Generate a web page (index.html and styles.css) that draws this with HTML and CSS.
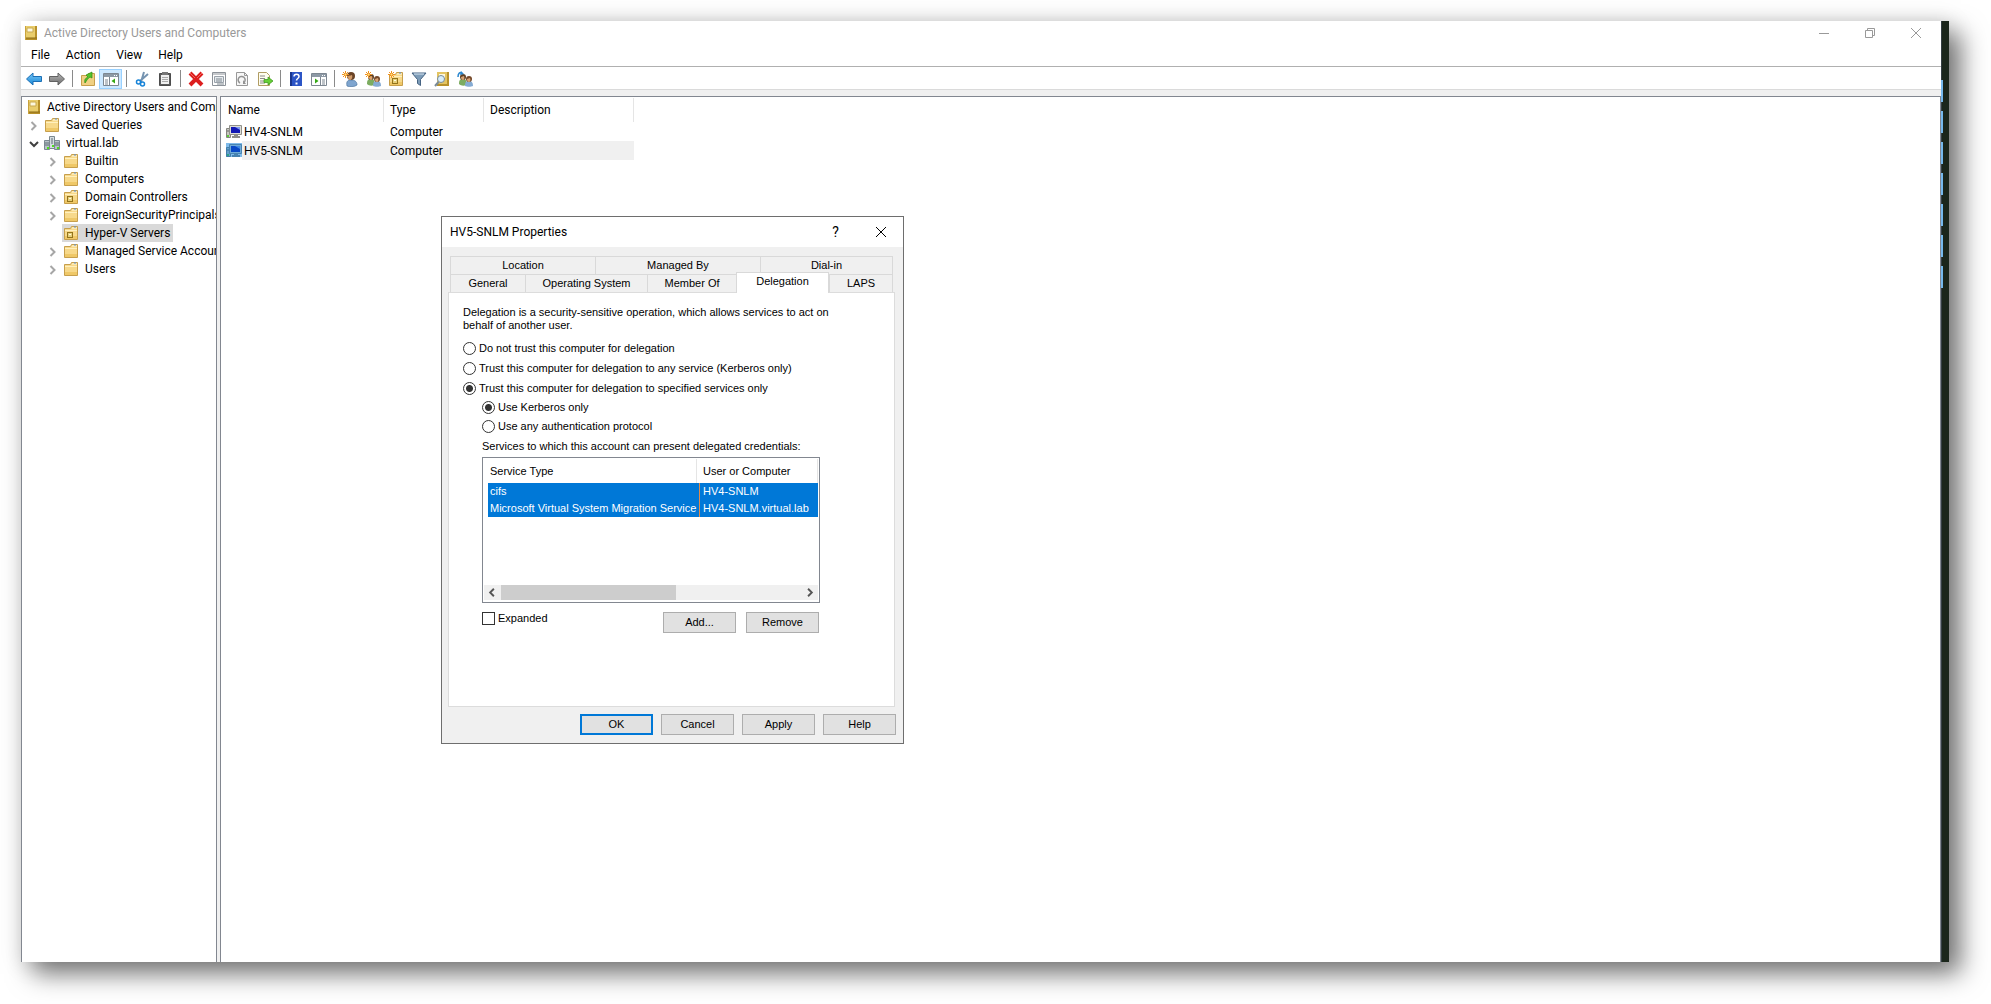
FILE: index.html
```html
<!DOCTYPE html>
<html lang="en">
<head>
    <meta charset="UTF-8">
    <meta name="viewport" content="width=device-width, initial-scale=1.0">
    <title>Active Directory Users and Computers</title>
    <link rel="stylesheet" href="styles.css">
</head>
<body>
    <!-- Shared icons -->
    <svg class="icon-defs" width="0" height="0" aria-hidden="true">
        <symbol id="i-book" viewBox="0 0 16 16">
            <rect x="2" y="1" width="12" height="14" fill="#e9cd6c"/>
            <path d="M12 1h2v14H2v-2h10z" fill="#b8912b"/>
            <rect x="2" y="1" width="1" height="14" fill="#c9a33d"/>
            <path d="M4 3h6v4H4z" fill="#fdf8df" stroke="#c9a94e"/>
            <path d="M3 13h11" stroke="#8a6a14"/>
        </symbol>
        <symbol id="i-folder" viewBox="0 0 16 16">
            <path d="M1.500 3.500h6l1-2h6v13h-13z" fill="#f7d98b" stroke="#c79f4c"/>
            <path d="M9 3h5" stroke="#fff6d8"/>
            <path d="M11 2h2" stroke="#5a8fd0"/>
            <path d="M2 5.500h12" stroke="#fff0bf"/>
            <path d="M2 11h12v3H2z" fill="#efc868"/>
        </symbol>
        <symbol id="i-ou" viewBox="0 0 16 16">
            <use href="#i-folder"/>
            <rect x="4.500" y="7.500" width="5" height="5" fill="#e6cf7a" stroke="#93731b"/>
            <path d="M6 9h2v1H6z" fill="#fffbe0"/>
        </symbol>
        <symbol id="i-domain" viewBox="0 0 16 16">
            <path d="M.5 5.500h5v9h-5zM10.500 5.500h5v9h-5z" fill="#b9c3c9" stroke="#7b8890"/>
            <path d="M5.500 1.500h5v12h-5z" fill="#d5dde1" stroke="#7b8890"/>
            <path d="M7 4h2M7 6h2M7 8h2M1 8h4M1 10h4M11 8h4M11 10h4" stroke="#5f6d75"/>
            <path d="M3 12h2v2H3zM8 10h2v2H8zM13 12h2v2h-2z" fill="#4fe01c"/>
        </symbol>
        <symbol id="i-computer" viewBox="0 0 16 16">
            <path d="M.5 4.500h4v9h-4z" fill="#c6c6c0" stroke="#85857f"/>
            <path d="M1 7h3" stroke="#666"/>
            <path d="M1 11h2v2H1z" fill="#5ccc38"/>
            <path d="M3.500 1.500h12v9h-12z" fill="#dcdcd6" stroke="#90908a"/>
            <path d="M5 3h9v6H5z" fill="#1218b4"/>
            <path d="M9 3h5v3z" fill="#7f9bf0"/>
            <path d="M8 11h4v1h2v2H6v-2h2z" fill="#8d8d88"/>
        </symbol>
        <symbol id="i-user" viewBox="0 0 16 16">
            <path d="M5 15c-1-5 1-6 4-6s6 1 6 5c-2 2-8 2-10 1z" fill="#7fa5cf" stroke="#4d769f" stroke-width=".7"/>
            <circle cx="9" cy="5" r="4" fill="#6b4426"/>
            <path d="M6 6c0-2 2-1 4-2 1 3-1 5-2 5s-2-1-2-3z" fill="#d29c6b"/>
        </symbol>
        <symbol id="i-users" viewBox="0 0 16 16">
            <path d="M2 13c0-4 1-5 4-5s4 2 3 6c-2 1-5 1-7-1z" fill="#7cac60"/>
            <circle cx="6" cy="6" r="3" fill="#5e4127"/>
            <path d="M4 6l3-1c1 2 0 4-1 4s-2-1-2-3z" fill="#d8a373"/>
            <path d="M8 15c0-4 1-5 4-5s4 2 4 5c-2 1-6 1-8 0z" fill="#85abd3"/>
            <circle cx="12" cy="8" r="3" fill="#74482a"/>
            <path d="M10 8l3-1c1 2 0 4-1 4s-2-1-2-3z" fill="#d8a373"/>
        </symbol>
        <symbol id="i-spark" viewBox="0 0 16 16">
            <path d="M3.500 0v7M0 3.500h7M1 1l5 5M6 1L1 6" stroke="#f0921e"/>
            <circle cx="3.500" cy="3.500" r="1" fill="#ffe48a"/>
        </symbol>
        <symbol id="i-right" viewBox="0 0 16 16">
            <path d="M5.500 5l4 4-4 4" fill="none" stroke="currentColor" stroke-width="2"/>
        </symbol>
        <symbol id="i-down" viewBox="0 0 16 16">
            <path d="M4 7l4 4 4-4" fill="none" stroke="currentColor" stroke-width="2"/>
        </symbol>
        <linearGradient id="blue" x2="0" y2="1"><stop offset="0" stop-color="#7cc7f5"/><stop offset="1" stop-color="#1487d8"/></linearGradient>
        <linearGradient id="gray" x2="0" y2="1"><stop offset="0" stop-color="#b5b5b5"/><stop offset="1" stop-color="#6c6c6c"/></linearGradient>
    </svg>

    <div class="screen">
        <div class="window">
            <header class="title-bar">
                <svg class="icon"><use href="#i-book"/></svg>
                <span class="title">Active Directory Users and Computers</span>
                <div class="window-buttons">
                    <button aria-label="Minimize"><svg viewBox="0 0 12 12"><path d="M1 6.500h10"/></svg></button>
                    <button aria-label="Restore"><svg viewBox="0 0 12 12"><path d="M1.500 3.500h7v7h-7zM3.500 3V1.500h7v7H9"/></svg></button>
                    <button aria-label="Close"><svg viewBox="0 0 12 12"><path d="M1 1l10 10M11 1L1 11"/></svg></button>
                </div>
            </header>

            <nav class="menu-bar">
                <button>File</button>
                <button>Action</button>
                <button>View</button>
                <button>Help</button>
            </nav>

            <div class="toolbar">
                <button aria-label="Back"><svg class="icon" viewBox="0 0 16 16"><path d="M.5 8L7 2v3.500h8.500v5H7V14z" fill="url(#blue)" stroke="#1c6fb5"/></svg></button>
                <button aria-label="Forward"><svg class="icon" viewBox="0 0 16 16"><path d="M15.500 8L9 2v3.500H.5v5H9V14z" fill="url(#gray)" stroke="#626262"/></svg></button>
                <span class="separator"></span>
                <button aria-label="Up one level"><svg class="icon" viewBox="0 0 16 16"><path d="M1.500 4.500h6l1-2h6v12h-13z" fill="#f0d083" stroke="#c79f4c"/><path d="M5 12c-1-4 1-5 3-6L6 4l6-3v6L10 6c-2 1-3 3-5 6z" fill="#55c52c" stroke="#2f8a14" stroke-width=".7"/></svg></button>
                <button class="active" aria-label="Show console tree"><svg class="icon" viewBox="0 0 16 16"><path d="M.5 2.500h15v12H.5z" fill="#fff" stroke="#7d8791"/><path d="M1 3h14v3H1z" fill="#8d99a5"/><path d="M11 4.500h1M13 4.500h1" stroke="#fff"/><path d="M2 9h3M2 11h3M2 13h3M6.500 6v8" stroke="#7d8791"/><path d="M12 7.500v5L8.500 10z" fill="#35a814"/></svg></button>
                <span class="separator"></span>
                <button aria-label="Cut"><svg class="icon" viewBox="0 0 16 16"><path d="M10 1L7 11M14 3L6 10" stroke="#7593b0" stroke-width="2"/><circle cx="4.500" cy="11" r="2" fill="none" stroke="#1683d8" stroke-width="1.500"/><circle cx="8.500" cy="13" r="2" fill="none" stroke="#1683d8" stroke-width="1.500"/></svg></button>
                <button aria-label="Copy"><svg class="icon" viewBox="0 0 16 16"><path d="M2.500 2.500h11v12h-11z" fill="#5c5c5c" stroke="#4c4c4c"/><path d="M4 4h8v9H4z" fill="#f0f0f0"/><path d="M5 1h6v3H5z" fill="#777"/><path d="M5 6.500h6M5 8.500h6M5 10.500h6" stroke="#aaa"/></svg></button>
                <span class="separator"></span>
                <button aria-label="Delete"><svg class="icon" viewBox="0 0 16 16"><path d="M2 2l12 12M14 2L2 14" stroke="#dc1e1e" stroke-width="4"/><path d="M2 2l5 5M14 2L9 7" stroke="#f36a60"/></svg></button>
                <button aria-label="Properties"><svg class="icon" viewBox="0 0 16 16"><path d="M1.500 1.500h13v13h-13z" fill="#fff" stroke="#8c9299"/><path d="M2 3h12" stroke="#8c9299"/><path d="M3.500 5.500h9v6h-9z" fill="#e4e9ed" stroke="#9aa2aa"/><path d="M5 8h6M5 10h6M6 13h7" stroke="#7f8890"/></svg></button>
                <button aria-label="Refresh"><svg class="icon" viewBox="0 0 16 16"><path d="M2.500 1.500h8l3 3v10h-11z" fill="#f7f7f7" stroke="#999"/><path d="M10.500 1.500v3h3" fill="none" stroke="#999"/><path d="M6 12a3.500 3.500 0 1 1 4-.5" fill="none" stroke="#929292" stroke-width="1.500"/><path d="M9 9v4h3z" fill="#929292"/></svg></button>
                <button aria-label="Export list"><svg class="icon" viewBox="0 0 16 16"><path d="M1.500 1.500h8l3 3v10h-11z" fill="#fffdee" stroke="#b09c63"/><path d="M3 5h5M3 7.500h5M3 10h4M3 12h5" stroke="#8c8c8c"/><path d="M7 8.500h4V6l5 4-5 4v-2.500H7z" fill="#67cf38" stroke="#359216" stroke-width=".7"/></svg></button>
                <span class="separator"></span>
                <button aria-label="Help"><svg class="icon" viewBox="0 0 16 16"><path d="M2 1h12v14H2z" fill="#2c55c6"/><path d="M2 1h2v14H2z" fill="#17348c"/><path d="M6 5.500c0-3 5-3 5 0 0 2-2.500 2-2.500 4" fill="none" stroke="#fff" stroke-width="1.500"/><path d="M7.500 11.500h2v2h-2z" fill="#fff"/></svg></button>
                <button aria-label="Show action pane"><svg class="icon" viewBox="0 0 16 16"><path d="M.5 2.500h15v12H.5z" fill="#fff" stroke="#7d8791"/><path d="M1 3h14v3H1z" fill="#8d99a5"/><path d="M11 4.500h1M13 4.500h1" stroke="#fff"/><path d="M11 9h3M11 11h3M11 13h3M9.500 6v8" stroke="#7d8791"/><path d="M4 7.500v5L7.500 10z" fill="#35a814"/></svg></button>
                <span class="separator"></span>
                <button aria-label="New user"><svg class="icon"><use href="#i-user"/><use href="#i-spark"/></svg></button>
                <button aria-label="New group"><svg class="icon"><use href="#i-users"/><use href="#i-spark"/></svg></button>
                <button aria-label="New organizational unit"><svg class="icon"><use href="#i-ou"/><use href="#i-spark"/></svg></button>
                <button aria-label="Filter"><svg class="icon" viewBox="0 0 16 16"><path d="M1 2h14L9.500 8.500v6l-3-2v-4z" fill="#7d9cb8" stroke="#456382"/><path d="M3 3h10" stroke="#d9e7f2"/></svg></button>
                <button aria-label="Find"><svg class="icon" viewBox="0 0 16 16"><path d="M3 1h12v14H3z" fill="#e3c462"/><path d="M13 1h2v14H3v-2h10z" fill="#b8912b"/><path d="M5 3h6v4H5z" fill="#fdf8df"/><circle cx="7" cy="8" r="3.500" fill="#d7eefb" stroke="#798a97"/><path d="M4.500 11L1 15" stroke="#798a97" stroke-width="2"/></svg></button>
                <button aria-label="Add to group"><svg class="icon"><use href="#i-users"/><path d="M1 6c0-4 2-5 4-4" fill="none" stroke="#2b87cf" stroke-width="1.500"/><path d="M4 0l3 3-4 1z" fill="#2b87cf"/></svg></button>
            </div>

            <div class="panes">
                <aside class="tree">
                    <ul>
                        <li class="root"><svg class="icon"><use href="#i-book"/></svg><span>Active Directory Users and Computers</span></li>
                        <li><svg class="chevron"><use href="#i-right"/></svg><svg class="icon"><use href="#i-folder"/></svg><span>Saved Queries</span></li>
                        <li><svg class="chevron open"><use href="#i-down"/></svg><svg class="icon"><use href="#i-domain"/></svg><span>virtual.lab</span></li>
                    </ul>
                    <ul class="children">
                        <li><svg class="chevron"><use href="#i-right"/></svg><svg class="icon"><use href="#i-folder"/></svg><span>Builtin</span></li>
                        <li><svg class="chevron"><use href="#i-right"/></svg><svg class="icon"><use href="#i-folder"/></svg><span>Computers</span></li>
                        <li><svg class="chevron"><use href="#i-right"/></svg><svg class="icon"><use href="#i-ou"/></svg><span>Domain Controllers</span></li>
                        <li><svg class="chevron"><use href="#i-right"/></svg><svg class="icon"><use href="#i-folder"/></svg><span>ForeignSecurityPrincipals</span></li>
                        <li class="selected"><svg class="icon"><use href="#i-ou"/></svg><span>Hyper-V Servers</span></li>
                        <li><svg class="chevron"><use href="#i-right"/></svg><svg class="icon"><use href="#i-folder"/></svg><span>Managed Service Accounts</span></li>
                        <li><svg class="chevron"><use href="#i-right"/></svg><svg class="icon"><use href="#i-folder"/></svg><span>Users</span></li>
                    </ul>
                </aside>

                <main class="list">
                    <table class="objects">
                        <thead>
                            <tr><th class="col-name">Name</th><th class="col-type">Type</th><th class="col-desc">Description</th></tr>
                        </thead>
                        <tbody>
                            <tr><td><div class="object"><svg class="icon"><use href="#i-computer"/></svg><span>HV4-SNLM</span></div></td><td>Computer</td><td></td></tr>
                            <tr class="current"><td><div class="object"><svg class="icon"><use href="#i-computer"/><rect class="tint" width="16" height="14"/></svg><span>HV5-SNLM</span></div></td><td>Computer</td><td></td></tr>
                        </tbody>
                    </table>
                </main>
            </div>
        </div>

        <!-- Strip of the desktop behind the window -->
        <div class="desktop">
            <i></i><i></i><i></i><i></i><i></i><i></i><i></i>
        </div>

        <!-- Properties dialog -->
        <div class="dialog" role="dialog" aria-labelledby="dialog-title">
            <div class="dialog-title">
                <span id="dialog-title">HV5-SNLM Properties</span>
                <button class="what" aria-label="What's this">?</button>
                <button aria-label="Close dialog"><svg viewBox="0 0 12 12"><path d="M1 1l10 10M11 1L1 11"/></svg></button>
            </div>
            <form class="dialog-body">
                <div class="tabs tabs-back">
                    <button type="button">Location</button>
                    <button type="button">Managed By</button>
                    <button type="button">Dial-in</button>
                </div>
                <div class="tabs tabs-front">
                    <button type="button">General</button>
                    <button type="button">Operating System</button>
                    <button type="button">Member Of</button>
                    <button type="button" class="current-tab">Delegation</button>
                    <button type="button">LAPS</button>
                </div>
                <div class="tab-page">
                    <p>Delegation is a security-sensitive operation, which allows services to act on<br>behalf of another user.</p>
                    <div class="option"><input type="radio" id="trust-none" name="trust"><label for="trust-none">Do not trust this computer for delegation</label></div>
                    <div class="option"><input type="radio" id="trust-any" name="trust"><label for="trust-any">Trust this computer for delegation to any service (Kerberos only)</label></div>
                    <div class="option"><input type="radio" id="trust-some" name="trust" checked><label for="trust-some">Trust this computer for delegation to specified services only</label></div>
                    <div class="sub-options">
                        <div class="option"><input type="radio" id="kerberos" name="protocol" checked><label for="kerberos">Use Kerberos only</label></div>
                        <div class="option"><input type="radio" id="any-auth" name="protocol"><label for="any-auth">Use any authentication protocol</label></div>
                        <div class="caption">Services to which this account can present delegated credentials:</div>
                        <div class="services">
                            <table>
                                <thead>
                                    <tr><th class="col-service">Service Type</th><th class="col-user">User or Computer</th></tr>
                                </thead>
                                <tbody>
                                    <tr><td>cifs</td><td>HV4-SNLM</td></tr>
                                    <tr><td>Microsoft Virtual System Migration Service</td><td>HV4-SNLM.virtual.lab</td></tr>
                                </tbody>
                            </table>
                            <div class="scrollbar">
                                <button type="button" aria-label="Scroll left"><svg viewBox="0 0 16 16"><path d="M10 4L6 8l4 4"/></svg></button>
                                <div class="track"><div class="thumb"></div></div>
                                <button type="button" aria-label="Scroll right"><svg viewBox="0 0 16 16"><path d="M7 4l4 4-4 4"/></svg></button>
                            </div>
                        </div>
                        <div class="services-actions">
                            <div class="check"><input type="checkbox" id="expanded"><label for="expanded">Expanded</label></div>
                            <button type="button" class="btn">Add...</button>
                            <button type="button" class="btn">Remove</button>
                        </div>
                    </div>
                </div>
                <div class="dialog-buttons">
                    <button type="button" class="btn default">OK</button>
                    <button type="button" class="btn">Cancel</button>
                    <button type="button" class="btn">Apply</button>
                    <button type="button" class="btn">Help</button>
                </div>
            </form>
        </div>
    </div>
</body>
</html>
```
FILE: styles.css
```css
* {
    box-sizing: border-box;
}

body {
    margin: 0;
    height: 100vh;
    padding: 21px 42px 42px 21px;
    display: flex;
    background: #fff;
    color: #000;
    font-family: Roboto, "Noto Sans", sans-serif;
    font-size: 12px;
    line-height: 18px;
    overflow: hidden;
}

button {
    margin: 0;
    padding: 0;
    border: 0;
    background: none;
    color: inherit;
    font: inherit;
}

ul {
    margin: 0;
    padding: 0;
    list-style: none;
}

table {
    border-collapse: collapse;
    table-layout: fixed;
}

th,
td {
    padding: 0;
    font-weight: normal;
    text-align: left;
    white-space: nowrap;
}

.icon-defs {
    position: absolute;
}

.icon {
    width: 16px;
    height: 16px;
    flex: none;
}

.screen {
    position: relative;
    flex: 1;
    display: flex;
    min-width: 0;
    box-shadow: 2px 2px 22px rgba(0, 0, 0, 0.15), 12px 12px 24px rgba(0, 0, 0, 0.5);
}

.window {
    flex: 1;
    min-width: 0;
    display: flex;
    flex-direction: column;
    background: #fff;
}

/* Title and menu */
.title-bar {
    height: 24px;
    padding: 0 2px;
    display: flex;
    align-items: center;
    color: #999;
}

.title {
    flex: 1;
    margin-left: 5px;
}

.window-buttons {
    display: flex;
}

.window-buttons button {
    width: 46px;
    height: 20px;
    display: flex;
    align-items: center;
    justify-content: center;
}

.window-buttons svg,
.dialog-title svg {
    width: 12px;
    height: 12px;
    fill: none;
    stroke: #999;
}

.menu-bar {
    height: 21px;
    padding: 0 0 2px 10px;
    display: flex;
    align-items: center;
    gap: 16px;
}

/* Toolbar */
.toolbar {
    height: 24px;
    padding: 2px 0 0 1px;
    display: flex;
    align-items: stretch;
    border-top: 1px solid #b0b0b0;
    border-bottom: 1px solid #dadada;
}

.toolbar button {
    width: 23px;
    display: flex;
    align-items: center;
    justify-content: center;
}

.toolbar .active {
    background: #cce8ff;
    border: 1px solid #99d1ff;
}

.separator {
    width: 1px;
    margin: 1px 3px 2px 4px;
    background: #8a8a8a;
}

/* Panes */
.panes {
    flex: 1;
    min-height: 0;
    padding-top: 6px;
    display: flex;
    gap: 3px;
    background: #f0f0f0;
}

.tree,
.list {
    border: 1px solid #828790;
    border-bottom: 0;
    background: #fff;
}

.tree {
    width: 196px;
    flex: none;
    padding: 1px 1px 0 4px;
    overflow: hidden;
}

.tree li {
    height: 18px;
    display: flex;
    align-items: center;
    white-space: nowrap;
}

.tree li span {
    margin-left: 6px;
}

.tree li.root span {
    margin-left: 5px;
}

.tree .children {
    padding-left: 19px;
}

.tree .icon {
    margin-left: 2px;
}

.tree .root .icon {
    margin-left: 0;
}

.chevron {
    width: 16px;
    height: 16px;
    flex: none;
    color: #a6a6a6;
}

.chevron.open {
    color: #404040;
}

.tree .selected {
    width: 111px;
    margin-left: 17px;
    background: #d9d9d9;
}

.tree .selected .icon {
    margin-left: 1px;
}

.list {
    flex: 1;
    min-width: 0;
}

.objects th {
    height: 25px;
    padding-left: 6px;
    background: linear-gradient(#e5e5e5, #e5e5e5) right 1px / 1px 24px no-repeat;
}

.objects th:first-child {
    padding-left: 7px;
}

.objects td {
    height: 19px;
    padding-left: 6px;
}

.objects td:first-child {
    padding-left: 5px;
}

.objects {
    width: 413px;
}

.col-name {
    width: 163px;
}

.col-type {
    width: 100px;
}

.col-desc {
    width: 150px;
}

.current td {
    background: #f0f0f0;
}

.current td:first-child {
    background: linear-gradient(#f0f0f0, #f0f0f0) 21px 0 no-repeat;
}

.object {
    display: flex;
    align-items: center;
}

.object span {
    margin-left: 2px;
}

.tint {
    fill: #0078d7;
    opacity: 0.5;
}

/* Desktop strip */
.desktop {
    width: 8px;
    padding-top: 59px;
    display: flex;
    flex-direction: column;
    gap: 9px;
    border-left: 1px solid #333d42;
    background: #1b261b;
}

.desktop i {
    width: 2px;
    height: 22px;
    margin-left: -1px;
    background: #76b9ed;
}

/* Dialog */
.dialog {
    position: absolute;
    left: 420px;
    top: 195px;
    width: 463px;
    border: 1px solid #6e6e6e;
    background: #f0f0f0;
}

.dialog-title {
    height: 30px;
    padding-left: 8px;
    display: flex;
    align-items: center;
    background: #fff;
}

.dialog-title span {
    flex: 1;
}

.dialog-title button {
    width: 45px;
    height: 30px;
    display: flex;
    align-items: center;
    justify-content: center;
}

.dialog-title .what {
    font-size: 14px;
}

.dialog-title svg {
    stroke: #000;
}

.dialog-body {
    padding: 9px 7px 8px 6px;
    font-family: "Liberation Sans", Arial, sans-serif;
    font-size: 11px;
    line-height: 13px;
}

.tabs {
    padding: 0 3px 0 2px;
    display: grid;
}

.tabs-back {
    grid-template-columns: 145fr 165fr 133fr;
}

.tabs-front {
    grid-template-columns: 75fr 122fr 89fr 93fr 64fr;
}

.tabs button {
    height: 18px;
    border: 1px solid #d9d9d9;
    border-width: 1px 0 0 1px;
}

.tabs button:last-child {
    border-right-width: 1px;
}

.tabs .current-tab {
    height: 21px;
    margin: -2px 0 -1px;
    padding-bottom: 3px;
    border-right-width: 1px;
    background: #fff;
    z-index: 1;
}

.tab-page {
    height: 415px;
    margin-right: 1px;
    padding: 13px 74px 0 14px;
    border: 1px solid #dcdcdc;
    background: #fff;
}

.tab-page p {
    margin: 0 0 6px;
    white-space: nowrap;
}

.option {
    height: 20px;
    display: flex;
    align-items: center;
    white-space: nowrap;
}

input {
    appearance: none;
    width: 13px;
    height: 13px;
    margin: 0 3px 0 0;
    flex: none;
    border: 1px solid #333;
    background: #fff;
}

input[type="radio"] {
    border-radius: 50%;
}

input[type="radio"]:checked {
    background: radial-gradient(circle, #333 3px, #fff 4px);
}

.sub-options {
    padding-left: 19px;
}

.sub-options .option {
    height: 19px;
}

.caption {
    height: 21px;
    padding-top: 4px;
    white-space: nowrap;
}

.services {
    height: 146px;
    padding: 1px 1px 2px;
    display: flex;
    flex-direction: column;
    justify-content: space-between;
    border: 1px solid #828790;
}

.services table {
    width: 334px;
}

.services th {
    height: 24px;
    padding-left: 6px;
    background: linear-gradient(#e5e5e5, #e5e5e5) right 0 / 1px 24px no-repeat;
}

.services td {
    height: 17px;
    padding-left: 6px;
    background: #0078d7;
    color: #fff;
}

.services td:first-child {
    background: linear-gradient(#0078d7, #0078d7) 4px 0 no-repeat;
}

.services td:last-child {
    background: linear-gradient(90deg, #0078d7 2px, #e08b4b 2px, #e08b4b 3px, #0078d7 3px);
}

.col-service {
    width: 213px;
}

.col-user {
    width: 121px;
}

.scrollbar {
    height: 15px;
    display: flex;
    background: #f0f0f0;
}

.scrollbar button {
    width: 17px;
    height: 15px;
}

.scrollbar svg {
    display: block;
    width: 16px;
    height: 15px;
    fill: none;
    stroke: #555;
    stroke-width: 2;
}

.track {
    flex: 1;
}

.thumb {
    width: 175px;
    height: 15px;
    background: #cdcdcd;
}

.services-actions {
    margin-top: 9px;
    padding-right: 1px;
    display: flex;
    gap: 10px;
}

.check {
    flex: 1;
    display: flex;
}

.btn {
    width: 73px;
    height: 21px;
    border: 1px solid #adadad;
    background: #e1e1e1;
}

.btn.default {
    border: 2px solid #0078d7;
}

.dialog-buttons {
    margin-top: 7px;
    display: flex;
    justify-content: flex-end;
    gap: 8px;
}
```
